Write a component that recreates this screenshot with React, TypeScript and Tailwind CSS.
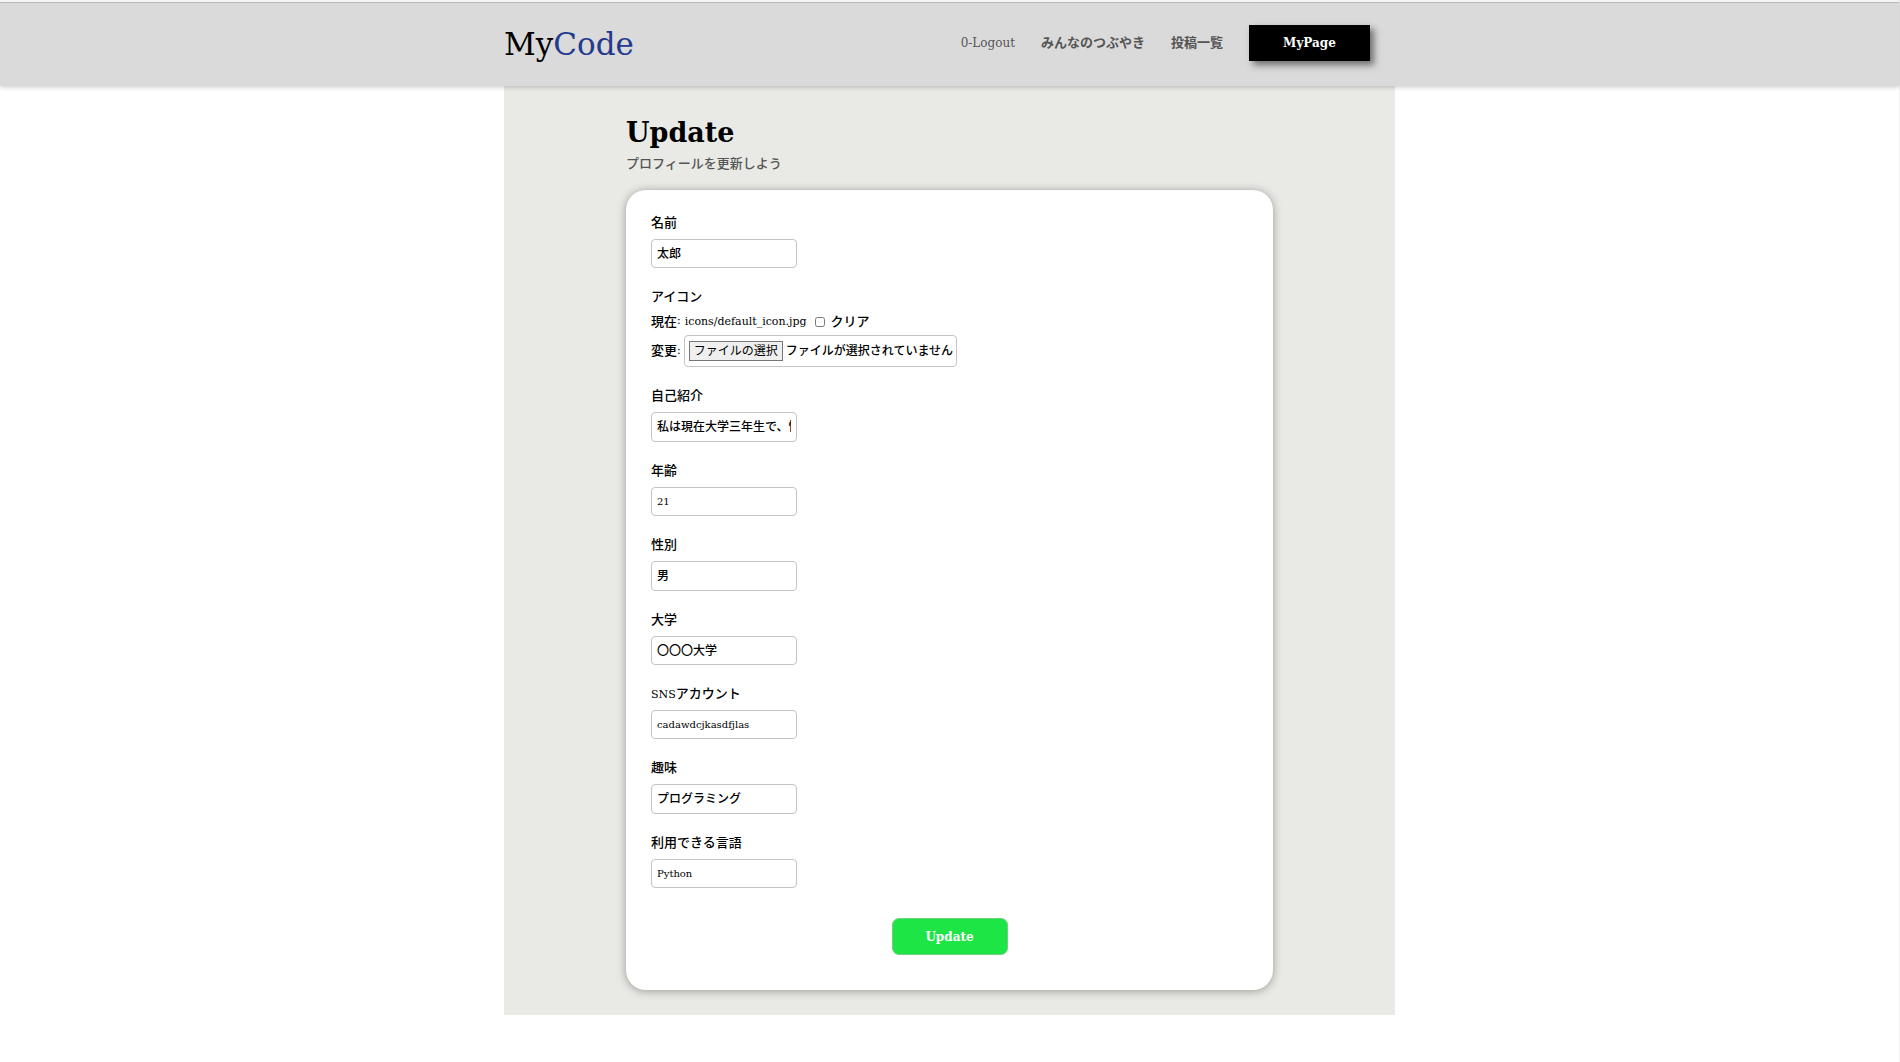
import { useState } from "react";

type FieldProps = {
  id: string;
  label: React.ReactNode;
  value: string;
  latin?: boolean;
  short?: boolean;
};

const labelClass = "mb-1.5 block text-[13px] leading-5 font-medium";

function TextField({ id, label, value, latin, short }: FieldProps) {
  const [text, setText] = useState(value);
  return (
    <div className="mb-[19px]">
      <label htmlFor={id} className={labelClass}>
        {label}
      </label>
      <input
        id={id}
        type="text"
        value={text}
        onChange={(e) => setText(e.target.value)}
        className={`block w-[146px] rounded border border-[#c4c4c4] bg-white px-[5px] font-medium ${
          latin ? "text-[10px]" : "pb-[3px] text-[12px]"
        } ${short ? "h-[29px]" : "h-[30px]"}`}
      />
    </div>
  );
}

function IconField() {
  const [clear, setClear] = useState(false);
  const [fileName, setFileName] = useState("");
  return (
    <fieldset className="mb-[19px]">
      <legend className={labelClass}>アイコン</legend>
      <div className="mb-[5px] flex h-[17px] items-center text-[13px] font-medium">
        現在<span className="text-[11px] font-normal">:</span>
        <a href="#icon" className="ml-1 pt-0.5 text-[11px] font-normal">
          icons/default_icon.jpg
        </a>
        <input
          id="clear"
          type="checkbox"
          checked={clear}
          onChange={(e) => setClear(e.target.checked)}
          className="mr-1.5 ml-2 size-[10px]"
        />
        <label htmlFor="clear">クリア</label>
      </div>
      <div className="flex items-center text-[13px] font-medium">
        変更<span className="text-[11px] font-normal">:</span>
        <div className="ml-[3px] flex h-8 w-[273px] items-center rounded border border-[#c4c4c4] pl-1">
          <input
            id="icon-file"
            type="file"
            className="sr-only"
            onChange={(e) => setFileName(e.target.files?.[0]?.name ?? "")}
          />
          <label
            htmlFor="icon-file"
            className="flex h-5 w-[94px] shrink-0 cursor-pointer items-center justify-center border border-[#767676] bg-[#efefef] text-[12px] leading-none font-normal"
          >
            ファイルの選択
          </label>
          <span className="ml-[3px] text-[12px] whitespace-nowrap">
            {fileName || "ファイルが選択されていません"}
          </span>
        </div>
      </div>
    </fieldset>
  );
}

export default function App() {
  return (
    <div className="min-h-screen border-r border-[#f0f0f0] bg-white font-['DejaVu_Serif','Noto_Sans_CJK_JP',serif] text-black">
      <header className="relative border-t-2 border-[#f4f4f4] shadow-[0_1px_5px_rgba(0,0,0,0.22)]">
        <div className="border-t border-[#b8b8b8] bg-[#dadada]">
          <div className="mx-auto flex h-[83px] max-w-[891px] items-center justify-between pr-[25px]">
            <a href="#home" className="text-[31px] leading-none">
              My<span className="text-[#233a8f]">Code</span>
            </a>
            <nav className="flex items-center gap-[26px] pb-[3px] text-[13px] font-bold text-[#555]">
              <a href="#logout" className="text-[12px] font-normal">
                0-Logout
              </a>
              <a href="#tweets">みんなのつぶやき</a>
              <a href="#posts">投稿一覧</a>
              <a
                href="#mypage"
                className="flex h-9 w-[121px] items-center justify-center bg-black text-[12px] text-white shadow-[4px_4px_7px_rgba(0,0,0,0.5)]"
              >
                MyPage
              </a>
            </nav>
          </div>
        </div>
      </header>

      <main className="mx-auto max-w-[891px] bg-[#e9eae5] px-[122px] pt-[30px] pb-[25px]">
        <h1 className="text-[27px] leading-[34px] font-bold">Update</h1>
        <p className="mt-1 text-[13px] leading-5 font-medium text-[#555]">プロフィールを更新しよう</p>

        <form
          onSubmit={(e) => e.preventDefault()}
          className="mt-4 rounded-[20px] bg-white px-[25px] pt-[23px] pb-[35px] shadow-[0_1px_10px_rgba(0,0,0,0.35)]"
        >
          <TextField id="name" label="名前" value="太郎" short />
          <IconField />
          <TextField id="bio" label="自己紹介" value="私は現在大学三年生で、情報工学を学んでいます" />
          <TextField id="age" label="年齢" value="21" latin short />
          <TextField id="gender" label="性別" value="男" />
          <TextField id="university" label="大学" value="〇〇〇大学" short />
          <TextField
            id="sns"
            label={
              <>
                <span className="text-[11px] leading-none font-normal">SNS</span>アカウント
              </>
            }
            value="cadawdcjkasdfjlas"
            latin
            short
          />
          <TextField id="hobby" label="趣味" value="プログラミング" />
          <TextField id="languages" label="利用できる言語" value="Python" latin short />
          <button
            type="submit"
            className="mx-auto mt-[30px] block h-[37px] w-[116px] rounded-[7px] border border-[#6fd083] bg-[#1ee546] text-[12px] font-bold text-white"
          >
            Update
          </button>
        </form>
      </main>
    </div>
  );
}
